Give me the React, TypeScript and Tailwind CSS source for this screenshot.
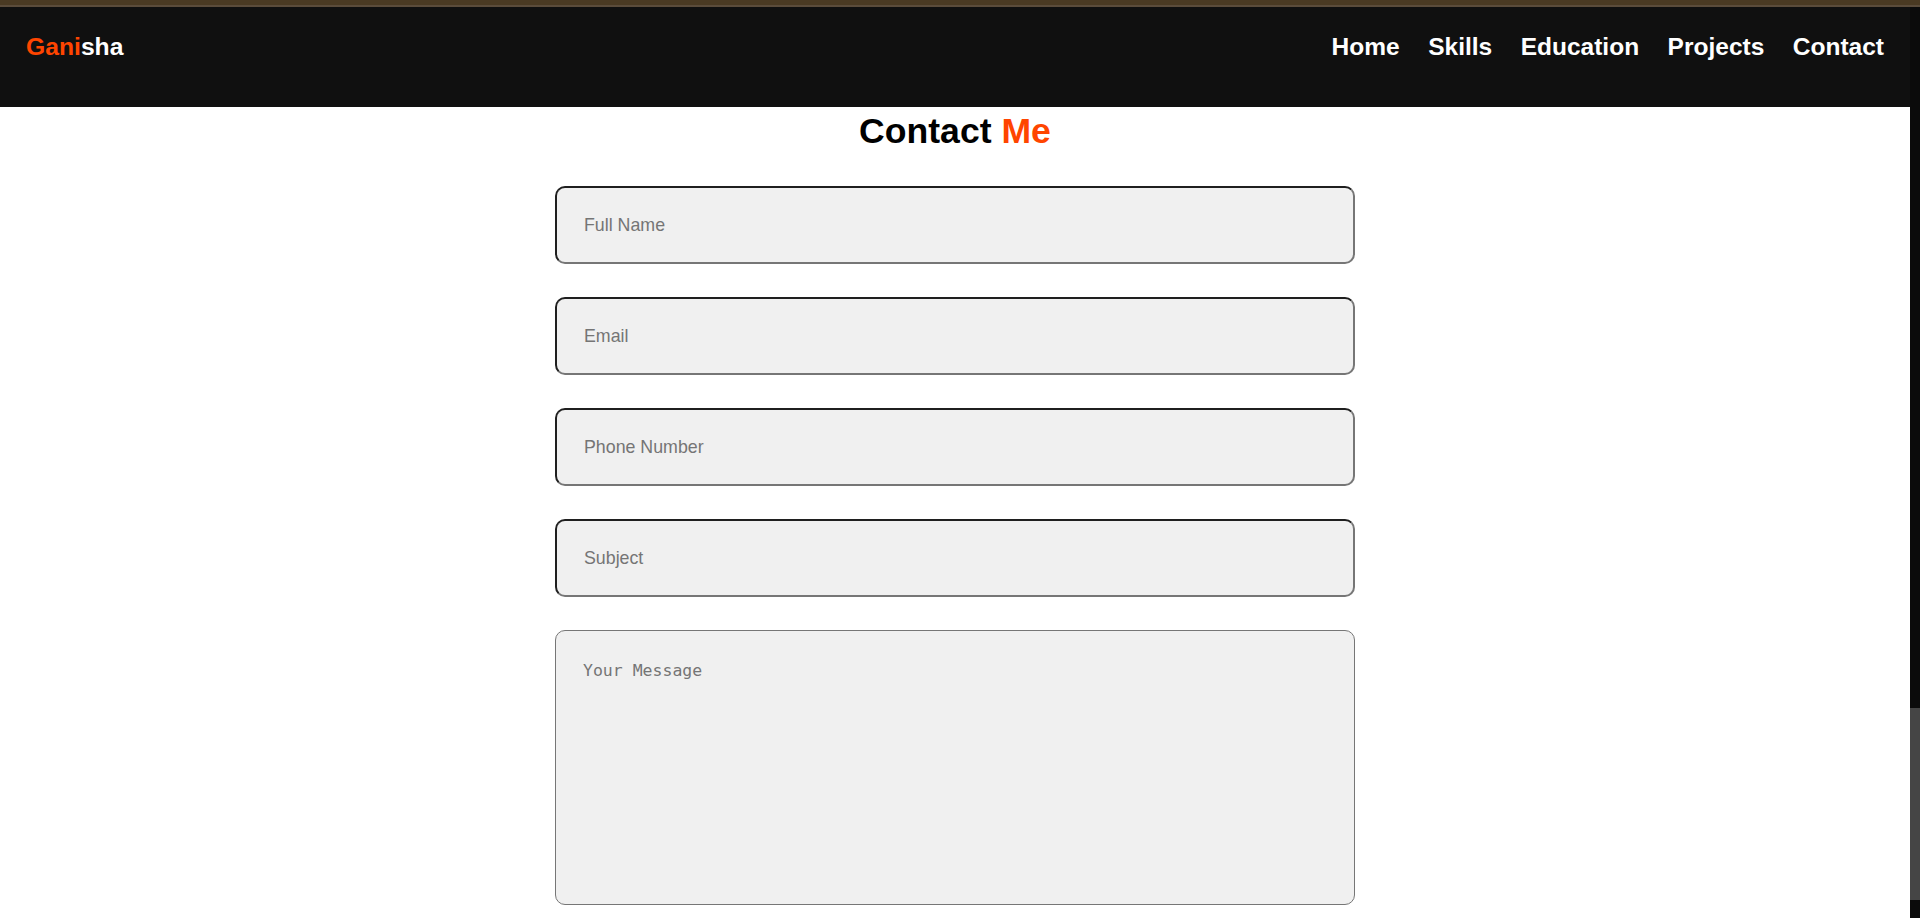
import React from "react";

const navItems = ["Home", "Skills", "Education", "Projects", "Contact"];

function Field({ placeholder }: { placeholder: string }) {
  return (
    <input
      type="text"
      placeholder={placeholder}
      className="block h-[78px] w-[800px] rounded-[10px] border-2 border-t-[#1f1f1f] border-l-[#1f1f1f] border-r-[#767676] border-b-[#767676] bg-[#f0f0f0] pl-[27px] text-[17.8px] text-black placeholder:text-[#757575] outline-none"
      style={{ fontFamily: '"Liberation Sans", Arial, sans-serif' }}
    />
  );
}

export default function App() {
  return (
    <div
      className="flex h-[918px] w-[1920px] flex-col overflow-hidden bg-white"
      style={{ fontFamily: '"Liberation Sans", Arial, sans-serif' }}
    >
      <div className="h-[5px] w-full shrink-0 bg-[#4a3a23]" />
      <div className="h-[2px] w-full shrink-0 bg-[#5b4c3b]" />
      <div className="flex min-h-0 flex-1">
        <div className="flex min-w-0 flex-1 flex-col">
          <header className="flex h-[100px] shrink-0 items-start justify-between bg-[#101010] px-[26px] pt-[26px]">
            <div className="text-[24.7px] font-bold leading-[28px]">
              <span className="text-[#ff4500]">Gani</span>
              <span className="text-white">sha</span>
            </div>
            <nav className="flex gap-[28.5px] text-[24.5px] font-bold leading-[28px] text-white">
              {navItems.map((item) => (
                <a key={item} href="#" className="text-white">
                  {item}
                </a>
              ))}
            </nav>
          </header>
          <main className="flex flex-col items-center">
            <h2 className="mt-[4px] text-[35.6px] font-bold leading-[40px] text-black">
              Contact <span className="text-[#ff4500]">Me</span>
            </h2>
            <form className="mt-[35px] flex flex-col gap-[33px]">
              <Field placeholder="Full Name" />
              <Field placeholder="Email" />
              <Field placeholder="Phone Number" />
              <Field placeholder="Subject" />
              <textarea
                placeholder="Your Message"
                className="block h-[275px] w-[800px] resize-none rounded-[10px] border border-[#767676] bg-[#f0f0f0] px-[27px] pt-[30px] text-[16.5px] leading-[20px] text-black placeholder:text-[#757575] outline-none"
                style={{ fontFamily: '"DejaVu Sans Mono", monospace' }}
              />
            </form>
          </main>
        </div>
        <div className="flex w-[10px] shrink-0 flex-col bg-[#0b0b0b]">
          <div className="h-[701px] shrink-0" />
          <div className="h-[192px] shrink-0 bg-[#454545]" />
        </div>
      </div>
    </div>
  );
}
